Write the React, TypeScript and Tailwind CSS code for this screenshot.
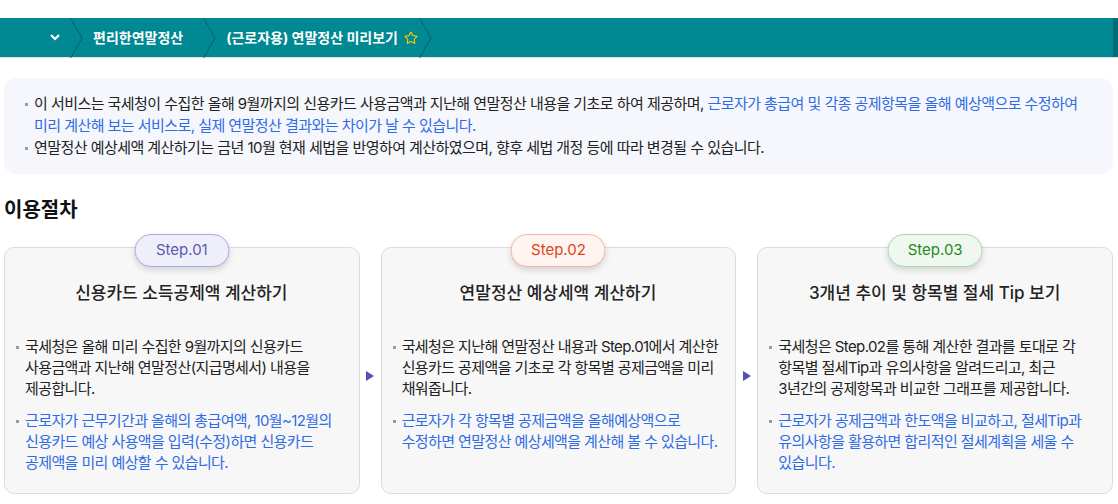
import { Star } from "lucide-react";

const steps = [
  {
    label: "Step.01",
    badge: "bg-[#efeffa] border-[#a9a9e3] text-[#5a5ab5]",
    title: "신용카드 소득공제액 계산하기",
    info: "국세청은 올해 미리 수집한 9월까지의 신용카드 사용금액과 지난해 연말정산(지급명세서) 내용을 제공합니다.",
    tip: "근로자가 근무기간과 올해의 총급여액, 10월~12월의 신용카드 예상 사용액을 입력(수정)하면 신용카드 공제액을 미리 예상할 수 있습니다.",
  },
  {
    label: "Step.02",
    badge: "bg-[#fff4ef] border-[#f5b89f] text-[#e0431c]",
    title: "연말정산 예상세액 계산하기",
    info: "국세청은 지난해 연말정산 내용과 Step.01에서 계산한 신용카드 공제액을 기초로 각 항목별 공제금액을 미리 채워줍니다.",
    tip: "근로자가 각 항목별 공제금액을 올해예상액으로 수정하면 연말정산 예상세액을 계산해 볼 수 있습니다.",
  },
  {
    label: "Step.03",
    badge: "bg-[#eef8ee] border-[#a9daa9] text-[#1f8a22]",
    title: "3개년 추이 및 항목별 절세 Tip 보기",
    info: "국세청은 Step.02를 통해 계산한 결과를 토대로 각 항목별 절세Tip과 유의사항을 알려드리고, 최근 3년간의 공제항목과 비교한 그래프를 제공합니다.",
    tip: "근로자가 공제금액과 한도액을 비교하고, 절세Tip과 유의사항을 활용하면 합리적인 절세계획을 세울 수 있습니다.",
  },
];

function Separator() {
  return (
    <svg width="13" height="40" viewBox="0 0 13 40" className="shrink-0">
      <path d="M0.5 0 L12 20 L0.5 40" fill="none" stroke="#0b5a62" strokeWidth="1" />
    </svg>
  );
}

function Bullet({ children, blue }: { children: React.ReactNode; blue?: boolean }) {
  return (
    <li className={`relative pl-[9px] ${blue ? "text-[#2f6be6]" : "text-[#222]"}`}>
      <span className="absolute left-0 top-[10px] w-[3px] h-[3px] bg-[#9a9a9a]" />
      {children}
    </li>
  );
}

export default function App() {
  return (
    <div
      className="min-h-screen bg-white break-keep"
      style={{ fontFamily: 'Inter, "Noto Sans CJK KR", sans-serif' }}
    >
      <div className="pt-[18px]">
        <div className="flex h-[40px] bg-[#008893] border-b border-[#e2e2e2]">
          <div className="flex flex-1 items-center text-white text-[14px] font-bold">
            <div className="ml-[50px] w-[10px] flex items-center">
              <svg width="10" height="7" viewBox="0 0 10 7">
                <polyline points="1,1 5,5 9,1" fill="none" stroke="white" strokeWidth="2.2" />
              </svg>
            </div>
            <div className="ml-[10px]">
              <Separator />
            </div>
            <span className="ml-[10px]">편리한연말정산</span>
            <div className="ml-[20px]">
              <Separator />
            </div>
            <span className="ml-[10px]">(근로자용) 연말정산 미리보기</span>
            <Star className="ml-[6px] text-[#f2cc00]" size={14} strokeWidth={2} />
            <div className="ml-[1px]">
              <Separator />
            </div>
          </div>
          <div className="w-[5px] bg-[#006c74]" />
        </div>
      </div>

      <div className="ml-[4px] w-[1109px]">
        <div className="mt-[20px] rounded-[12px] bg-[#f5f7fc] pl-[21px] pr-[25px] py-[15px] text-[15px] leading-[22px] tracking-[-0.55px]">
          <ul>
            <Bullet>
              이 서비스는 국세청이 수집한 올해 9월까지의 신용카드 사용금액과 지난해 연말정산 내용을 기초로 하여 제공하며,{" "}
              <span className="text-[#2f6be6]">
                근로자가 총급여 및 각종 공제항목을 올해 예상액으로 수정하여 미리 계산해 보는 서비스로, 실제 연말정산 결과와는 차이가 날 수 있습니다.
              </span>
            </Bullet>
            <Bullet>
              연말정산 예상세액 계산하기는 금년 10월 현재 세법을 반영하여 계산하였으며, 향후 세법 개정 등에 따라 변경될 수 있습니다.
            </Bullet>
          </ul>
        </div>

        <h2 className="mt-[22px] text-[20px] leading-[28px] font-semibold text-[#111]">이용절차</h2>

        <div className="mt-[23px] grid grid-cols-[1fr_21px_1fr_21px_1fr]">
          {steps.map((s, i) => (
            <div key={s.label} className="contents">
              {i > 0 && (
                <div className="flex items-center justify-center pt-[11px]">
                  <svg width="8" height="10" viewBox="0 0 8 10">
                    <polygon points="0,0 8,5 0,10" fill="#5252b2" />
                  </svg>
                </div>
              )}
              <div className="relative rounded-[10px] border border-[#dcdcdc] bg-[#f7f7f7] pl-[11px] pr-[12px] pb-[20px]">
                <div
                  className={`absolute left-1/2 -translate-x-1/2 -top-[14px] w-[95px] h-[33px] rounded-full border flex items-center justify-center text-[15px] shadow-[0_3px_6px_rgba(0,0,0,0.15)] ${s.badge}`}
                >
                  {s.label}
                </div>
                <h3 className="pt-[33px] text-center text-[17px] leading-[24px] font-medium text-[#222]">
                  {s.title}
                </h3>
                <ul className="mt-[31px] text-[15px] leading-[21px] tracking-[-0.6px] space-y-[11px]">
                  <Bullet>{s.info}</Bullet>
                  <Bullet blue>{s.tip}</Bullet>
                </ul>
              </div>
            </div>
          ))}
        </div>
      </div>
    </div>
  );
}
